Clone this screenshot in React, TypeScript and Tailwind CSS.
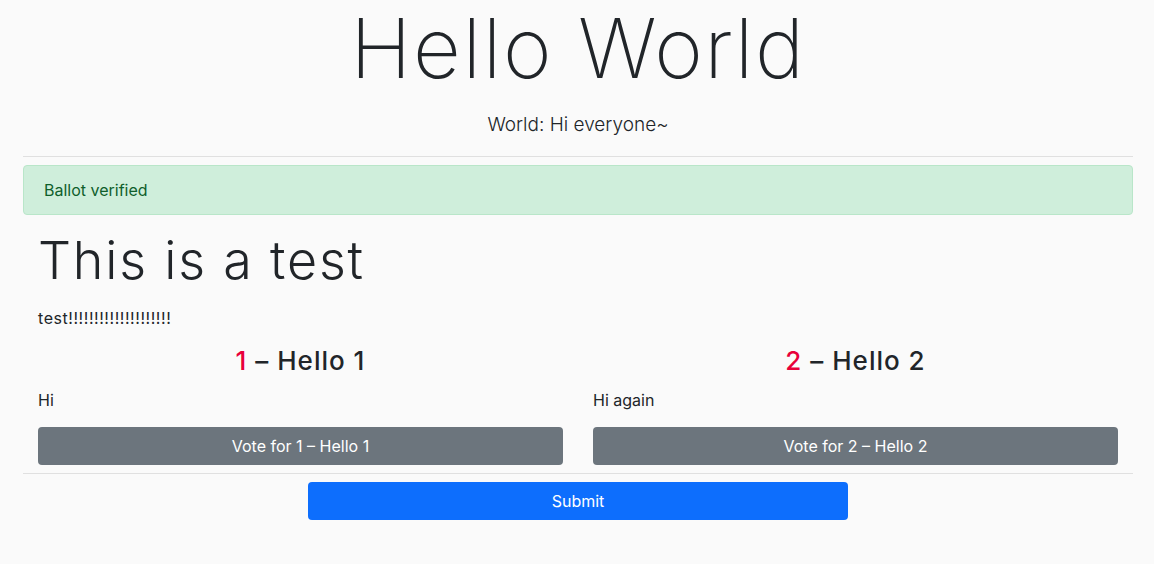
type Candidate = {
    id: number
    name: string
    description: string
}

const candidates: Candidate[] = [
    { id: 1, name: "Hello 1", description: "Hi" },
    { id: 2, name: "Hello 2", description: "Hi again" },
]

export default function App() {
    return (
        <div className="min-h-screen bg-[#fafafa] text-[#212529] font-['Inter','Liberation_Sans',sans-serif]">
            <div className="ml-[23px] w-[1110px]">
                <div className="text-center">
                    <h1 className="text-[83px] leading-[96px] font-extralight tracking-[1.6px]">Hello World</h1>
                    <p className="mt-[14px] text-[19px] leading-[30px] font-light">World: Hi everyone~</p>
                </div>

                <hr className="mt-[16px] border-t border-[#e0e0e0]" />

                <div className="mt-[8px] h-[50px] flex items-center px-[20px] rounded-[4px] border border-[#b9e6c9] bg-[#cfeedb] text-[#0f5f2c] text-[16px]">
                    Ballot verified
                </div>

                <div className="px-[15px]">
                    <h2 className="mt-[13px] text-[52px] leading-[66px] font-light tracking-[1.8px]">This is a test</h2>
                    <p className="mt-[12px] text-[16px] leading-[24px] tracking-[0.55px]">test!!!!!!!!!!!!!!!!!!!!</p>
                </div>

                <div className="grid grid-cols-2 mt-[14px]">
                    {candidates.map((c) => (
                        <div key={c.id} className="px-[15px]">
                            <h3 className="text-center text-[26px] leading-[34px] font-medium tracking-[1px]">
                                <span className="text-[#e8003a]">{c.id}</span>{" "}– {c.name}
                            </h3>
                            <p className="mt-[10px] text-[16px] leading-[24px]">{c.description}</p>
                            <button className="mt-[15px] w-full h-[38px] rounded-[4px] bg-[#6c757d] text-white text-[16px]">
                                Vote for {c.id} – {c.name}
                            </button>
                        </div>
                    ))}
                </div>

                <hr className="mt-[8px] border-t border-[#e0e0e0]" />

                <button className="block mx-auto mt-[8px] w-[540px] h-[38px] rounded-[4px] bg-[#0d6efd] text-white text-[16px]">
                    Submit
                </button>
            </div>
        </div>
    )
}
